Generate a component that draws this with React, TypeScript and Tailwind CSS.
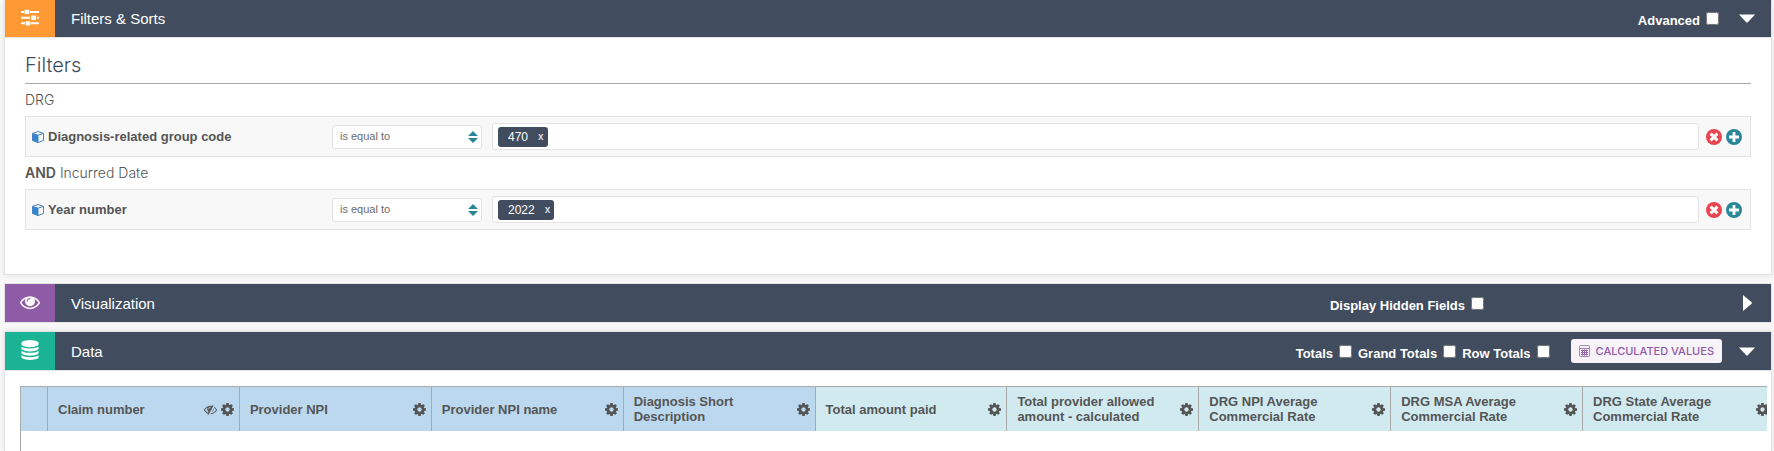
import type { ReactNode } from "react";

type IconProps = { className?: string };

function Glyph({ d, className, viewBox = "0 0 1792 1792" }: IconProps & { d: string; viewBox?: string }) {
  return (
    <svg viewBox={viewBox} className={className} fill="currentColor" aria-hidden="true">
      <path d={d} />
    </svg>
  );
}

const COG =
  "M1152 896q0-106-75-181t-181-75-181 75-75 181 75 181 181 75 181-75 75-181zm512-109v222q0 12-8 23t-20 13l-185 28q-19 54-39 91 35 50 107 138 10 12 10 25t-9 23q-27 37-99 108t-94 71q-12 0-26-9l-138-108q-44 23-91 38-16 136-29 186-7 28-36 28h-222q-14 0-24.5-8.5t-11.5-21.5l-28-184q-49-16-90-37l-141 107q-10 9-25 9-14 0-25-11-126-114-165-168-7-10-7-23 0-12 8-23 15-21 51-66.5t54-70.5q-27-50-41-99l-183-27q-13-2-21-12.5t-8-23.5v-222q0-12 8-23t19-13l186-28q14-46 39-92-40-57-107-138-10-12-10-24 0-10 9-23 26-36 98.5-107.5t94.5-71.5q13 0 26 10l138 107q44-23 91-38 16-136 29-186 7-28 36-28h222q14 0 24.5 8.5t11.5 21.5l28 184q49 16 90 37l142-107q9-9 24-9 13 0 25 10 129 119 165 170 7 8 7 22 0 12-8 23-15 21-51 66.5t-54 70.5q26 50 41 98l183 28q13 2 21 12.5t8 23.5z";
const EYE =
  "M1664 960q-152-236-381-353 61 104 61 225 0 185-131.5 316.5t-316.5 131.5-316.5-131.5-131.5-316.5q0-121 61-225-229 117-381 353 133 205 333.5 326.5t434.5 121.5 434.5-121.5 333.5-326.5zm-720-384q0-20-14-34t-34-14q-125 0-214.5 89.5t-89.5 214.5q0 20 14 34t34 14 34-14 14-34q0-86 61-147t147-61q20 0 34-14t14-34zm848 384q0 34-20 69-140 230-376.5 368.5t-499.5 138.5-499.5-139-376.5-368q-20-35-20-69t20-69q140-229 376.5-368t499.5-139 499.5 139 376.5 368q20 35 20 69z";
const EYE_SLASH =
  "M555 1335l78-141q-87-63-136-159t-49-203q0-121 61-225-229 117-381 353 167 258 427 375zm389-759q0-20-14-34t-34-14q-125 0-214.5 89.5t-89.5 214.5q0 20 14 34t34 14 34-14 14-34q0-86 61-147t147-61q20 0 34-14t14-34zm363-191q0 7-1 9-106 189-316 567t-315 566l-49 89q-10 16-28 16-12 0-134-70-16-10-16-28 0-12 44-87-143-65-263.5-173t-208.5-245q-20-31-20-69t20-69q153-235 380-371t496-136q89 0 180 17l54-97q10-16 28-16 5 0 18 6t31 15.5 33 18.5 31.5 18.5 19.5 11.5q16 10 16 27zm37 447q0 139-79 253.5t-209 164.5l280-502q8 45 8 84zm448 128q0 35-20 69-39 64-109 145-150 172-347.5 267t-419.5 95l74-132q212-18 392.5-137t301.5-307q-115-179-282-294l63-112q95 64 182.5 153t144.5 184q20 34 20 69z";
const DATABASE =
  "M896 768q237 0 443-43t325-127v170q0 69-103 128t-280 93.5-385 34.5-385-34.5-280-93.5-103-128v-170q119 84 325 127t443 43zm0 768q237 0 443-43t325-127v170q0 69-103 128t-280 93.5-385 34.5-385-34.5-280-93.5-103-128v-170q119 84 325 127t443 43zm0-384q237 0 443-43t325-127v170q0 69-103 128t-280 93.5-385 34.5-385-34.5-280-93.5-103-128v-170q119 84 325 127t443 43zm0-1152q208 0 385 34.5t280 93.5 103 128v128q0 69-103 128t-280 93.5-385 34.5-385-34.5-280-93.5-103-128v-128q0-69 103-128t280-93.5 385-34.5z";

function SlidersIcon({ className }: IconProps) {
  return (
    <svg viewBox="0 0 18 17" className={className} fill="currentColor" aria-hidden="true">
      <path d="M0 2h3v2H0zM9 2h9v2H9zM0 7.7h9v2H0zM16 7.7h2v2h-2zM0 13.3h4v2H0zM10 13.3h8v2h-8z" />
      <rect x="3.5" y="0.8" width="4.8" height="4.2" rx="0.8" />
      <rect x="10" y="6.5" width="5" height="4.4" rx="0.8" />
      <rect x="4.6" y="12.2" width="4.8" height="4.2" rx="0.8" />
    </svg>
  );
}

function CubeIcon({ className }: IconProps) {
  return (
    <svg viewBox="0 0 12 12" className={className} aria-hidden="true">
      <path d="M.6 2.4 6 4.1v7.4L.6 9.4z" fill="#2f86d2" />
      <path
        d="M6 .5 11.5 2.4v7L6 11.6.5 9.4v-7zM.5 2.4 6 4.2l5.5-1.8M6 4.2v7.4"
        fill="none"
        stroke="#4a83bd"
        strokeWidth="1"
        strokeLinejoin="round"
      />
    </svg>
  );
}

function CalculatorIcon({ className }: IconProps) {
  return (
    <svg viewBox="0 0 11 12" className={className} fill="none" stroke="#a184ba" aria-hidden="true">
      <rect x="0.5" y="0.5" width="10" height="11" rx="0.8" />
      <path d="M.5 3.5h10" />
      <path d="M2 5.5h7M2 7.5h7M2 9.5h7M3.5 4.5v6M5.5 4.5v6M7.5 4.5v6" stroke="#8e5ba6" strokeWidth="0.9" />
    </svg>
  );
}

function CheckOption({ id, label }: { id: string; label: string }) {
  return (
    <span className="flex items-center gap-1.5">
      <label htmlFor={id} className="pt-1 text-[13px] leading-[15px] font-bold">
        {label}
      </label>
      <input id={id} type="checkbox" className="size-[13px]" />
    </span>
  );
}

function Toggle({ open, label }: { open: boolean; label: string }) {
  return (
    <button type="button" aria-label={label} aria-expanded={open} className="flex w-4 justify-center">
      {open ? (
        <svg viewBox="0 0 16 9" className="h-[9px] w-4" fill="currentColor" aria-hidden="true">
          <path d="M0 .5h16L9 8q-1 1-2 0z" />
        </svg>
      ) : (
        <svg viewBox="0 0 9 16" className="h-4 w-[9px]" fill="currentColor" aria-hidden="true">
          <path d="M0 0v16l8.4-7q1-1 0-2z" />
        </svg>
      )}
    </button>
  );
}

function PanelHeader(props: { title: string; icon: ReactNode; tile: string; children: ReactNode }) {
  return (
    <header className="flex items-stretch bg-[#414d5e] text-white">
      <span className={`flex w-[50px] items-center justify-center pb-0.5 ${props.tile}`}>{props.icon}</span>
      <h2 className="flex-1 pt-0.5 pl-4 font-[Liberation_Sans,sans-serif] text-[15px] leading-9">{props.title}</h2>
      <div className="flex items-center pr-4">{props.children}</div>
    </header>
  );
}

function FilterRow({ id, name, value }: { id: string; name: string; value: string }) {
  return (
    <div className="flex items-center border border-[#e4e4e4] bg-[#f8f8f8] py-1.5 pr-2 pl-1.5">
      <label htmlFor={id} className="flex w-[300px] items-center gap-1 text-[13px] leading-[15px] font-bold text-[#555]">
        <CubeIcon className="size-3" />
        {name}
      </label>
      <div className="relative mr-2.5 w-[150px]">
        <select
          id={id}
          className="block h-6 w-full appearance-none rounded-[3px] border border-[#e4e4e4] bg-white px-[7px] text-[11px] text-[#6b6b6b]"
        >
          <option>is equal to</option>
        </select>
        <svg viewBox="0 0 10 12" className="pointer-events-none absolute top-1.5 right-1 h-3 w-2.5" fill="#2a8797" aria-hidden="true">
          <path d="M5 0l5 5H0zM0 7h10l-5 5z" />
        </svg>
      </div>
      <div className="flex h-[27px] flex-1 items-center rounded-[3px] border border-[#e4e4e4] bg-white pl-[5px]">
        <span className="flex h-5 items-center gap-2.5 rounded-[3px] bg-[#414d5e] pr-1 pl-2.5 text-[12px] text-white">
          {value}
          <button type="button" aria-label={`Remove ${value}`} className="text-[10px] font-bold text-[#d5dae0]">
            x
          </button>
        </span>
        <input aria-label={`${name} values`} className="h-5 min-w-0 flex-1 outline-none" />
      </div>
      <div className="flex gap-1 pl-[7px]">
        <button type="button" aria-label="Remove filter">
          <svg viewBox="0 0 16 16" className="size-4" aria-hidden="true">
            <circle cx="8" cy="8" r="8" fill="#ea4450" />
            <path d="M4.6 4.6l6.8 6.8M11.4 4.6l-6.8 6.8" stroke="#fff" strokeWidth="3" />
          </svg>
        </button>
        <button type="button" aria-label="Add filter">
          <svg viewBox="0 0 16 16" className="size-4" aria-hidden="true">
            <circle cx="8" cy="8" r="8" fill="#2a8797" />
            <path d="M8 3v10M3 8h10" stroke="#fff" strokeWidth="2.8" />
          </svg>
        </button>
      </div>
    </div>
  );
}

const COLUMNS = [
  { name: "Claim number", hidden: true, measure: false },
  { name: "Provider NPI", hidden: false, measure: false },
  { name: "Provider NPI name", hidden: false, measure: false },
  { name: "Diagnosis Short Description", hidden: false, measure: false },
  { name: "Total amount paid", hidden: false, measure: true },
  { name: "Total provider allowed amount - calculated", hidden: false, measure: true },
  { name: "DRG NPI Average Commercial Rate", hidden: false, measure: true },
  { name: "DRG MSA Average Commercial Rate", hidden: false, measure: true },
  { name: "DRG State Average Commercial Rate", hidden: false, measure: true },
];

export default function App() {
  return (
    <main className="flex min-h-screen flex-col gap-2 overflow-hidden bg-[#f8f8f8] pr-0.5 pl-1 font-[Liberation_Sans,sans-serif]">
      <section className="border border-t-0 border-[#e4e4e4] bg-white shadow-[0_0_5px_rgba(0,0,0,0.1)]">
        <div className="-mt-px border-b border-[#e4e4e4]">
          <PanelHeader title="Filters & Sorts" tile="bg-[#ff9933]" icon={<SlidersIcon className="h-[17px] w-[18px]" />}>
            <CheckOption id="advanced" label="Advanced" />
            <span className="w-5" />
            <Toggle open label="Toggle filters" />
          </PanelHeader>
        </div>
        <div className="px-5 pt-3.5 pb-11">
          <h3 className="border-b border-[#a9a9a9] pb-1 font-[Inter,sans-serif] text-[20px] leading-[27px] font-light text-[#414d5e]">
            Filters
          </h3>
          <h4 className="pt-0.5 pb-0.5 font-[Inter,sans-serif] text-[14px] leading-7 font-light text-[#555]">DRG</h4>
          <FilterRow id="drg" name="Diagnosis-related group code" value="470" />
          <h4 className="pt-0.5 pb-0.5 font-[Inter,sans-serif] text-[14px] leading-7 font-light text-[#555]">
            <b className="font-semibold">AND</b> Incurred Date
          </h4>
          <FilterRow id="year" name="Year number" value="2022" />
        </div>
      </section>

      <section className="border border-[#e4e4e4] bg-white">
        <PanelHeader title="Visualization" tile="bg-[#8e5ba6]" icon={<Glyph d={EYE} className="size-5" />}>
          <CheckOption id="hidden-fields" label="Display Hidden Fields" />
          <span className="w-[255px]" />
          <Toggle open={false} label="Toggle visualization" />
        </PanelHeader>
      </section>

      <section className="flex-1 border border-b-0 border-[#e4e4e4] bg-white shadow-[0_0_5px_rgba(0,0,0,0.1)]">
        <div className="border-b border-[#e4e4e4]">
          <PanelHeader title="Data" tile="bg-[#1ab394]" icon={<Glyph d={DATABASE} className="size-5" />}>
            <span className="flex gap-1.5">
              <CheckOption id="totals" label="Totals" />
              <CheckOption id="grand-totals" label="Grand Totals" />
              <CheckOption id="row-totals" label="Row Totals" />
            </span>
            <button
              type="button"
              className="mr-[17px] ml-[21px] flex h-6 items-center gap-1.5 rounded-[3px] bg-[#f8f2f9] px-2 font-[Inter,sans-serif] text-[11px] font-medium text-[#8e5ba6]"
            >
              <CalculatorIcon className="h-3 w-[11px]" />
              CALCULATED VALUES
            </button>
            <Toggle open label="Toggle data" />
          </PanelHeader>
        </div>
        <div className="mt-[15px] mr-1 ml-[15px] h-[65px] overflow-hidden border-t border-l border-[#a9a9a9]">
          <table className="w-full min-w-[1754px] table-fixed border-separate border-spacing-0">
            <thead>
              <tr className="h-11">
                <th className="w-[27px] border-r border-[#a9a9a9] bg-[#bcd8ee]" aria-label="Row" />
                {COLUMNS.map((c) => (
                  <th
                    key={c.name}
                    scope="col"
                    className={`border-r border-[#a9a9a9] py-0 pr-[5px] pl-2.5 text-left text-[13px] leading-[15px] font-bold text-[#555] ${c.measure ? "bg-[#d0eaf0]" : "bg-[#bcd8ee]"}`}
                  >
                    <span className="flex items-center gap-1">
                      <span className="flex-1">{c.name}</span>
                      {c.hidden && <Glyph d={EYE_SLASH} className="size-[13px]" />}
                      <button type="button" aria-label={`${c.name} settings`}>
                        <Glyph d={COG} viewBox="128 128 1536 1536" className="size-[13px]" />
                      </button>
                    </span>
                  </th>
                ))}
              </tr>
            </thead>
          </table>
        </div>
      </section>
    </main>
  );
}
